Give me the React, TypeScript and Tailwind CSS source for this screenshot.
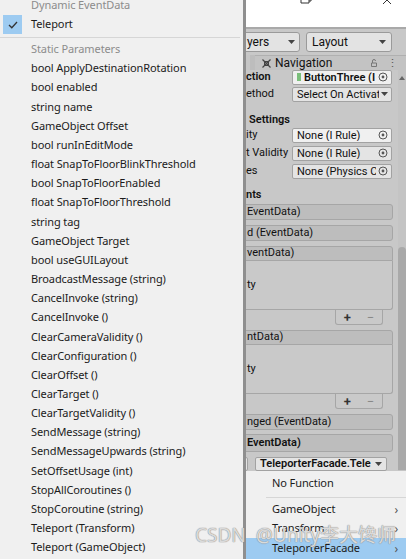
import React, {FC} from "react";

const menuItems = [
  "bool ApplyDestinationRotation",
  "bool enabled",
  "string name",
  "GameObject Offset",
  "bool runInEditMode",
  "float SnapToFloorBlinkThreshold",
  "bool SnapToFloorEnabled",
  "float SnapToFloorThreshold",
  "string tag",
  "GameObject Target",
  "bool useGUILayout",
  "BroadcastMessage (string)",
  "CancelInvoke (string)",
  "CancelInvoke ()",
  "ClearCameraValidity ()",
  "ClearConfiguration ()",
  "ClearOffset ()",
  "ClearTarget ()",
  "ClearTargetValidity ()",
  "SendMessage (string)",
  "SendMessageUpwards (string)",
  "SetOffsetUsage (int)",
  "StopAllCoroutines ()",
  "StopCoroutine (string)",
  "Teleport (Transform)",
  "Teleport (GameObject)",
];

const TargetIcon: FC = () => (
  <svg width="10" height="10" viewBox="0 0 10 10" className="shrink-0">
    <circle cx="5" cy="5" r="4" fill="none" stroke="#555" strokeWidth="1"/>
    <circle cx="5" cy="5" r="1.4" fill="#555"/>
  </svg>
);

const Caret: FC = () => (
  <svg width="7" height="4" viewBox="0 0 7 4" className="shrink-0">
    <path d="M0 0 L7 0 L3.5 4 Z" fill="#444"/>
  </svg>
);

const Field: FC<{children: React.ReactNode; bold?: boolean; caret?: boolean; light?: boolean}> = ({children, bold, caret, light}) => (
  <div className={`w-[100px] h-[15px] flex items-center gap-[2px] pl-[4px] pr-[3px] border border-[#a2a2a2] rounded-[2px] overflow-hidden ${light ? "bg-[#f0f0f0]" : "bg-[#e4e4e4]"}`}>
    <span className={`flex-1 whitespace-nowrap overflow-hidden text-[11px] leading-none text-[#111] ${bold ? "font-semibold" : ""}`}>{children}</span>
    {caret ? <Caret/> : <TargetIcon/>}
  </div>
);

const Row: FC<{label: string; children: React.ReactNode; className?: string}> = ({label, children, className}) => (
  <div className={`flex items-center ${className ?? ""}`}>
    <span className="w-[46px] text-[11px] text-[#111] whitespace-nowrap overflow-hidden">{label}</span>
    {children}
  </div>
);

const EventHeader: FC<{label: string; bold?: boolean; className?: string}> = ({label, bold, className}) => (
  <div className={`h-[16px] -ml-[6px] w-[153px] flex items-center pl-[6px] bg-[#bdbdbd] border border-[#a6a6a6] rounded-[3px] text-[11px] text-[#111] whitespace-nowrap overflow-hidden ${bold ? "font-semibold" : ""} ${className ?? ""}`}>
    {label}
  </div>
);

const EventBox: FC<{label: string; className?: string}> = ({label, className}) => (
  <div className={`-ml-[6px] w-[153px] flex flex-col ${className ?? ""}`}>
    <div className="h-[15px] flex items-center pl-[6px] bg-[#bdbdbd] border border-[#a6a6a6] rounded-t-[3px] text-[11px] text-[#111] whitespace-nowrap">
      {label}
    </div>
    <div className="h-[49px] pl-[6px] bg-[#c9c9c9] border-x border-b border-[#a6a6a6] rounded-b-[3px] flex items-center text-[11px] text-[#111]">
      ty
    </div>
    <div className="ml-[95px] w-[48px] h-[15px] bg-[#c9c9c9] border-x border-b border-[#a6a6a6] rounded-b-[3px] flex items-center justify-around text-[13px] leading-none">
      <span className="text-[#333] font-semibold">+</span>
      <span className="text-[#888]">−</span>
    </div>
  </div>
);

export default function App() {
  return (
    <div className="w-[406px] h-[559px] relative overflow-hidden flex bg-[#c8c8c8]" style={{fontFamily: '"Noto Sans", "Liberation Sans", sans-serif'}}>
      {/* function popup */}
      <div className="w-[243px] h-full shrink-0 bg-[#f0f0f0] flex flex-col text-[11px] tracking-[-0.1px] text-[#1b1b1b]">
        <div className="h-[19px] -mt-[4px] pl-[31px] flex items-center text-[#8c8c8c]">Dynamic EventData</div>
        <div className="h-[19px] flex items-center">
          <div className="ml-[3px] w-[19px] h-[19px] bg-[#9dcbf1] flex items-center justify-center">
            <svg width="10" height="8" viewBox="0 0 10 8">
              <path d="M1 4 L3.8 6.8 L9 1" fill="none" stroke="#333" strokeWidth="1.3"/>
            </svg>
          </div>
          <span className="ml-[9px]">Teleport</span>
        </div>
        <div className="h-[6px] flex items-center">
          <div className="w-[240px] h-px bg-[#d6d6d6]"/>
        </div>
        <div className="h-[19px] pl-[31px] flex items-center text-[#8c8c8c]">Static Parameters</div>
        {menuItems.map((item) => (
          <div key={item} className="h-[19.16px] pl-[31px] flex items-center whitespace-nowrap">{item}</div>
        ))}
      </div>
      <div className="w-[3px] h-full shrink-0 bg-[#8f8f8f]"/>

      {/* unity editor */}
      <div className="flex-1 h-full flex flex-col overflow-hidden" style={{fontFamily: 'Roboto, "Noto Sans", sans-serif'}}>
        <div className="h-[27px] bg-white relative">
          <svg width="157" height="27" viewBox="0 0 157 27" className="absolute inset-0">
            <path d="M55 -4 V3 H63 V-4 M63 1 H65 V-6" fill="none" stroke="#333" strokeWidth="1"/>
            <path d="M137 4 L141 0 L145 4" fill="none" stroke="#333" strokeWidth="1"/>
          </svg>
        </div>
        <div className="h-[2px] bg-[#a9a9a9]"/>
        <div className="h-[26px] bg-[#c8c8c8] flex items-center gap-[6px] pr-[14px]">
          <div className="-ml-[4px] w-[58px] h-[20px] bg-[#e3e3e3] border border-[#9a9a9a] rounded-[3px] flex items-center justify-between px-[4px] text-[12px] text-[#111]">
            <span>yers</span><Caret/>
          </div>
          <div className="flex-1 h-[20px] bg-[#e3e3e3] border border-[#9a9a9a] rounded-[3px] flex items-center justify-between px-[5px] text-[12px] text-[#111]">
            <span>Layout</span><Caret/>
          </div>
        </div>
        <div className="h-[15px] bg-[#bdbdbd] flex items-stretch">
          <div className="w-[4px] bg-[#c6c6c6]"/>
          <div className="flex-1 ml-[5px] bg-[#c3c3c3] border-t border-[#b0b0b0] flex items-center pl-[7px] pr-[8px] text-[12px] text-[#111]">
            <svg width="9" height="9" viewBox="0 0 9 9" className="mr-[4px]">
              <path d="M0.5 0.5 L8.5 8.5 M8.5 0.5 L0.5 8.5" stroke="#444" strokeWidth="1.2"/>
              <rect x="2.5" y="2.5" width="4" height="4" fill="none" stroke="#444" strokeWidth="1"/>
            </svg>
            <span className="flex-1">Navigation</span>
            <svg width="8" height="8" viewBox="0 0 8 8" className="mr-[9px]">
              <path d="M1.5 4 H6.5 V7.5 H1.5 Z M2.5 4 V2 A1.5 1.5 0 0 1 5.5 2" fill="none" stroke="#777" strokeWidth="1"/>
            </svg>
            <span className="text-[#555] text-[11px] leading-none">⋮</span>
          </div>
        </div>

        <div className="flex-1 flex">
          <div className="flex-1 flex flex-col">
            <Row label="ction" className="h-[14px] font-semibold">
              <div className="w-[100px] h-[15px] flex items-center gap-[3px] pl-[4px] pr-[3px] bg-[#f0f0f0] border border-[#a2a2a2] rounded-[2px] overflow-hidden">
                <span className="w-[4px] h-[8px] bg-[#7bbf7b] shrink-0"/>
                <span className="flex-1 whitespace-nowrap overflow-hidden text-[11px] leading-none font-semibold text-[#111]">ButtonThree (I</span>
                <TargetIcon/>
              </div>
            </Row>
            <Row label="ethod" className="h-[16px] mt-[2px]">
              <Field caret>Select On Activat</Field>
            </Row>
            <div className="h-[14px] mt-[11px] flex items-center text-[11px] font-semibold text-[#111] pl-[3px]">Settings</div>
            <Row label="ity" className="h-[16px]">
              <Field light>None (I Rule)</Field>
            </Row>
            <Row label="t Validity" className="h-[16px] mt-[2px]">
              <Field>None (I Rule)</Field>
            </Row>
            <Row label="es" className="h-[16px] mt-[2px]">
              <Field>None (Physics Ca</Field>
            </Row>
            <div className="h-[14px] mt-[9px] flex items-center text-[11px] font-semibold text-[#111]">nts</div>
            <EventHeader label="EventData)" className="mt-[2px]"/>
            <EventHeader label="d (EventData)" className="mt-[5px]"/>
            <EventBox label="ventData)" className="mt-[5px]"/>
            <EventBox label="ntData)" className="mt-[5px]"/>
            <EventHeader label="nged (EventData)" className="mt-[5px]"/>
            <EventHeader label="EventData)" bold className="mt-[4px] h-[18px]"/>
            <div className="h-[14px] mt-[5px] flex items-center gap-[7px]">
              <div className="-ml-[6px] w-[8px] h-[14px] bg-[#e4e4e4] border border-[#a2a2a2] rounded-[2px]"/>
              <div className="w-[132px] h-[14px] bg-[#e4e4e4] border border-[#a2a2a2] rounded-[2px] flex items-center justify-between px-[4px] text-[11px] font-semibold text-[#111] whitespace-nowrap">
                <span>TeleporterFacade.Tele</span><Caret/>
              </div>
            </div>
          </div>
          <div className="w-[8px] flex flex-col bg-[#c4c4c4]">
            <div className="h-[177px] flex justify-center pt-[6px]">
              <svg width="6" height="4" viewBox="0 0 6 4">
                <path d="M0 4 L6 4 L3 0 Z" fill="#666"/>
              </svg>
            </div>
            <div className="h-[223px] bg-[#a9a9a9] rounded-t-[4px]"/>
          </div>
        </div>
      </div>

      {/* object popup */}
      <div className="absolute left-[246px] top-[471px] w-[160px] h-[88px] bg-[#f0f0f0] flex flex-col text-[11px] tracking-[-0.1px] text-[#1b1b1b]">
        <div className="h-[24px] pl-[26px] flex items-center">No Function</div>
        <div className="h-[5px] flex items-center pl-[20px]">
          <div className="flex-1 h-px bg-[#d6d6d6]"/>
        </div>
        <div className="h-[19px] pl-[26px] pr-[8px] flex items-center justify-between"><span>GameObject</span><span className="text-[#555] text-[12px]">›</span></div>
        <div className="h-[19px] pl-[26px] pr-[8px] flex items-center justify-between"><span>Transform</span><span className="text-[#555] text-[12px]">›</span></div>
        <div className="h-[21px] pl-[26px] pr-[8px] flex items-center justify-between bg-[#9dcbf1]"><span>TeleporterFacade</span><span className="text-[#555] text-[12px]">›</span></div>
      </div>

      {/* watermark */}
      <div className="absolute left-[195px] top-[526px] flex items-center text-[19px] leading-none text-white/70 whitespace-nowrap [text-shadow:0_0_1px_#888,0_0_1px_#888]" style={{fontFamily: '"Noto Sans", "Noto Sans CJK SC", sans-serif'}}>
        <span>CSDN</span>
        <span className="ml-[10px]">@Unity李大馋师</span>
      </div>
    </div>
  );
}
